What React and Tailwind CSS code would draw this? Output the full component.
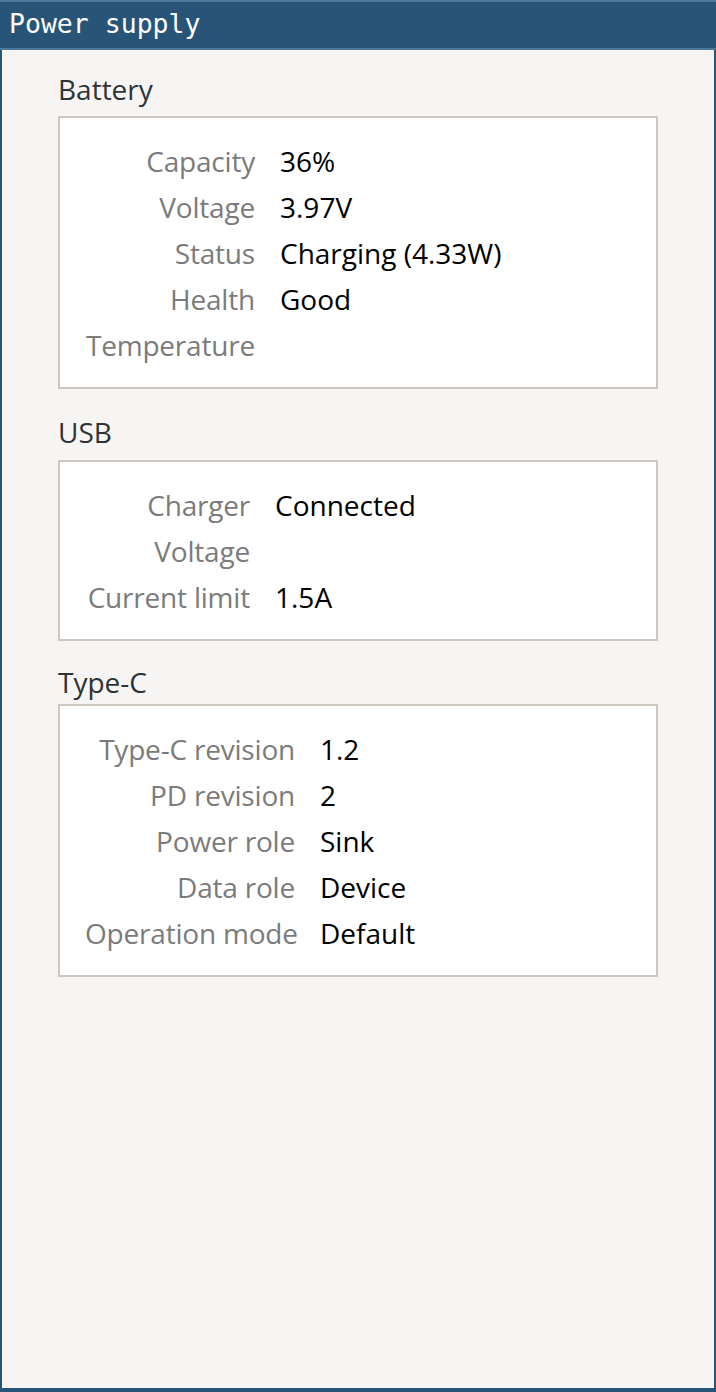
const SECTIONS = [
  {
    title: 'Battery',
    headingClass: 'mt-[19px] mb-[7px]',
    gridClass: 'grid-cols-[170px_1fr]',
    rows: [
      ['Capacity', '36%'],
      ['Voltage', '3.97V'],
      ['Status', 'Charging (4.33W)'],
      ['Health', 'Good'],
      ['Temperature', ''],
    ],
  },
  {
    title: 'USB',
    headingClass: 'mt-[23px] mb-[8px]',
    gridClass: 'grid-cols-[165px_1fr]',
    rows: [
      ['Charger', 'Connected'],
      ['Voltage', ''],
      ['Current limit', '1.5A'],
    ],
  },
  {
    title: 'Type-C',
    headingClass: 'mt-[21px] mb-[2px]',
    gridClass: 'grid-cols-[210px_1fr]',
    rows: [
      ['Type-C revision', '1.2'],
      ['PD revision', '2'],
      ['Power role', 'Sink'],
      ['Data role', 'Device'],
      ['Operation mode', 'Default'],
    ],
  },
];

function Section({ title, headingClass, gridClass, rows }) {
  return (
    <div>
      <div className={`${headingClass} leading-[40px] text-[#2e3436]`}>{title}</div>
      <div className="border-2 border-[#cdc7c2] bg-white pl-[25px] pt-[20px] pb-[19px]">
        <div className={`grid ${gridClass} gap-x-[25px] leading-[46px]`}>
          {rows.map(([label, value], i) => (
            <div key={i} className="contents">
              <span className="text-right whitespace-nowrap tracking-[-0.2px] text-[#7b7b7b]">{label}</span>
              <span className="text-black">{value}</span>
            </div>
          ))}
        </div>
      </div>
    </div>
  );
}

export default function App() {
  return (
    <div className="w-[716px] h-[1392px] bg-[#285577] flex flex-col">
      {/* i3-style title bar */}
      <div className="h-[50px] shrink-0 border-y-2 border-[#4c7899] bg-[#285577] pl-[9px]">
        <span
          className="block text-[26.5px] leading-[44px] text-white"
          style={{ fontFamily: "'DejaVu Sans Mono', monospace" }}
        >
          Power supply
        </span>
      </div>

      <div
        className="flex-1 mx-[2px] mb-[4px] bg-[#f6f5f4] px-[56px] text-[28px]"
        style={{ fontFamily: "'Open Sans', sans-serif" }}
      >
        {SECTIONS.map(s => (
          <Section key={s.title} {...s} />
        ))}
      </div>
    </div>
  );
}
